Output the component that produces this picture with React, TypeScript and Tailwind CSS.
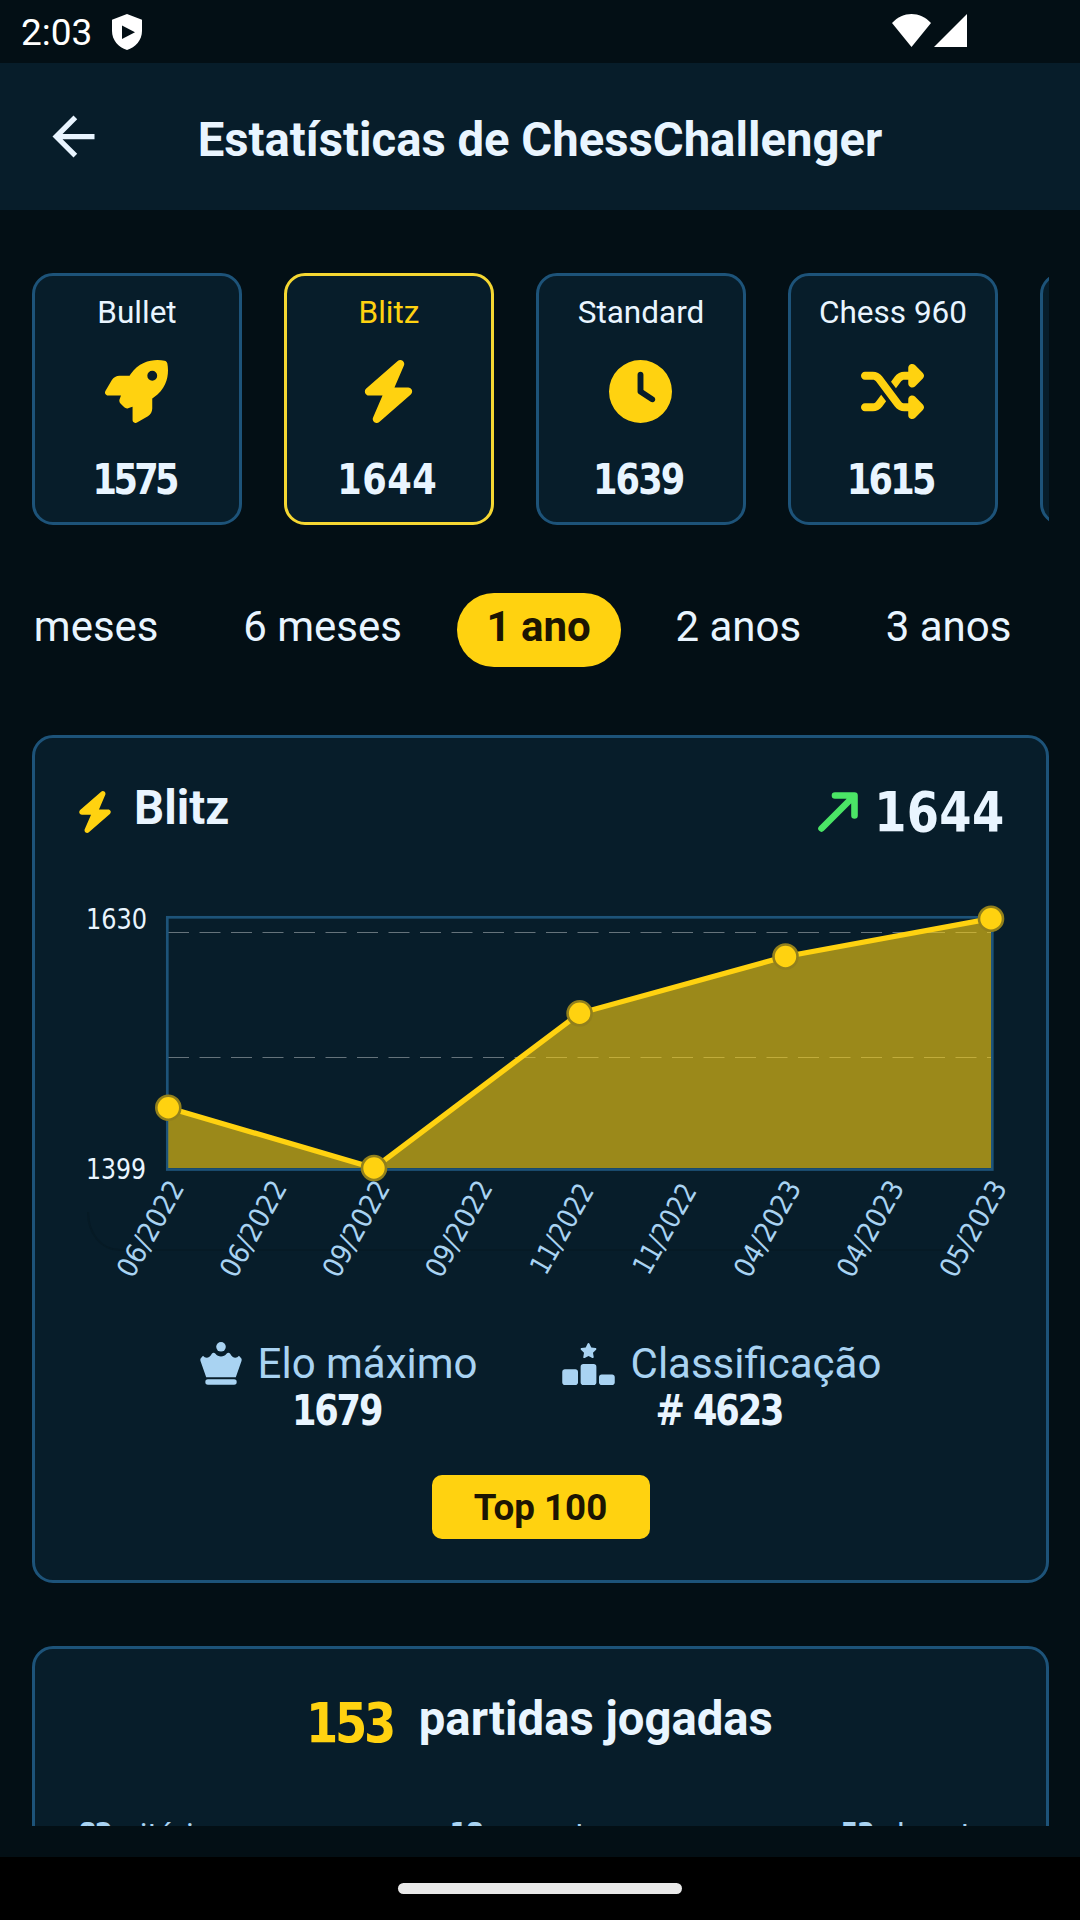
import type { ReactNode } from 'react';
import { MdArrowBack } from 'react-icons/md';
import { FaBolt, FaClock, FaRankingStar, FaRocket, FaShuffle } from 'react-icons/fa6';

interface Rating {
  label: string;
  value: string;
  icon: ReactNode;
  tracking: string;
}

const RATINGS: Rating[] = [
  { label: 'Bullet', value: '1575', icon: <FaRocket />, tracking: 'tracking-[-4px] mr-[5px]' },
  { label: 'Blitz', value: '1644', icon: <FaBolt />, tracking: 'tracking-[0.5px] mr-[3px]' },
  { label: 'Standard', value: '1639', icon: <FaClock />, tracking: 'tracking-[-2px] mr-[6px]' },
  { label: 'Chess 960', value: '1615', icon: <FaShuffle />, tracking: 'tracking-[-3px] mr-[6px]' },
];

const PERIODS = ['3 meses', '6 meses', '1 ano', '2 anos', '3 anos'];

const LABELS = [
  '06/2022',
  '06/2022',
  '09/2022',
  '09/2022',
  '11/2022',
  '11/2022',
  '04/2023',
  '04/2023',
  '05/2023',
];

// chart coordinates, relative to the left and top of the chart svg
const POINTS = [
  [134.3, 207.7],
  [340, 268],
  [545.6, 113.3],
  [751.5, 56.5],
  [957, 18.7],
];

function Digits({ className, children }: { className: string; children: ReactNode }) {
  return (
    <span
      className={`inline-block scale-x-[0.92] font-['DejaVu_Sans_Condensed','DejaVu_Sans',sans-serif] font-bold ${className}`}
    >
      {children}
    </span>
  );
}

function QueenIcon() {
  return (
    <svg className="h-[43px] w-[42px]" viewBox="0 0 42 43" fill="currentColor">
      <circle cx="21" cy="4.8" r="4.8" />
      <path d="M0.6 16.5L3 13.8C5.5 16.8 9.5 16.3 11.8 11.8Q13.5 9.8 15.5 11.8C18 15.3 24 15.3 26.5 11.8Q28.5 9.8 30.2 11.8C32.5 16.3 36.5 16.8 39 13.8L41.4 16.5Q42 17.5 41.5 19L35.8 35.3H6.2L0.5 19Q0 17.5 0.6 16.5Z" />
      <rect x="5.3" y="37.3" width="31.4" height="5.4" rx="2.6" />
    </svg>
  );
}

function StatusBar() {
  return (
    <div className="flex h-[63px] items-start justify-between bg-[#030f15] pl-[21px] pr-[113px] pt-[14px]">
      <div className="flex">
        <span className="mt-[-2px] text-[37px] leading-[42px] text-white">2:03</span>
        <svg className="ml-5 h-9 w-[30px]" viewBox="0 0 30 36">
          <path
            d="M15 0L30 5.8V17C30 26 23.5 33.5 15 36C6.5 33.5 0 26 0 17V5.8Z M10 11.5V25L23 18.2Z"
            fill="#fff"
            fillRule="evenodd"
          />
        </svg>
      </div>
      <div className="flex gap-[3px]">
        <svg className="h-[33px] w-[39px]" viewBox="0 0 39 33">
          <path d="M0 9C11 -3 28 -3 39 9L19.5 33Z" fill="#fff" />
        </svg>
        <svg className="h-[33px] w-[33px]" viewBox="0 0 33 33">
          <path d="M33 0V33H0Z" fill="#fff" />
        </svg>
      </div>
    </div>
  );
}

function Header() {
  return (
    <header className="grid h-[147px] grid-cols-[126px_1fr_126px] items-center bg-[#071d2a]">
      <MdArrowBack className="ml-[42px] h-[63px] w-[63px] text-[#e9f5ff]" />
      <h1 className="pt-[9px] text-center text-[47.25px] font-bold leading-none">
        Estatísticas de ChessChallenger
      </h1>
    </header>
  );
}

function RatingCard({ rating, active }: { rating: Rating; active: boolean }) {
  return (
    <div
      className={`flex h-[252px] w-[210px] shrink-0 flex-col items-center rounded-[21px] border-[3px] bg-[#071d2a] ${
        active ? 'border-[#f5d732]' : 'border-[#1d5379]'
      }`}
    >
      <span className={`mt-[18px] text-[31.5px] leading-[37px] ${active ? 'text-[#ffd210]' : ''}`}>
        {rating.label}
      </span>
      <span className="mr-px mt-[29px] text-[63px] text-[#ffd210]">{rating.icon}</span>
      <Digits className={`mt-8 text-[42.5px] leading-[50px] ${rating.tracking}`}>
        {rating.value}
      </Digits>
    </div>
  );
}

function Chart() {
  const line = POINTS.map((p) => p.join(',')).join(' ');

  return (
    <svg className="-ml-px mt-[58px] block h-[400px] w-[1010px]" viewBox="0 0 1010 400">
      <path
        d="M54 312C54 332 66 350 86 350H910C930 350 942 332 942 312"
        fill="none"
        stroke="#061a25"
        strokeWidth="2"
      />
      <g stroke="#fff" strokeOpacity="0.38" strokeDasharray="21 10.5">
        <line x1="134" x2="957" y1="32.5" y2="32.5" />
        <line x1="134" x2="957" y1="157.5" y2="157.5" />
      </g>
      <rect
        x="133.3"
        y="17.3"
        width="825"
        height="252.2"
        fill="none"
        stroke="#1d5379"
        strokeWidth="2.7"
      />
      <polygon points={`134.3,268 ${line} 957,268`} fill="#ffd210" fillOpacity="0.6" />
      <polyline points={line} fill="none" stroke="#ffd210" strokeWidth="5.3" />
      {POINTS.map(([x, y]) => (
        <circle key={x} cx={x} cy={y} r="12" fill="#ffd210" stroke="#92801c" strokeWidth="2.6" />
      ))}
      <g
        className="font-['DejaVu_Sans_Condensed','DejaVu_Sans',sans-serif]"
        fontSize="28"
        fill="#e9f5ff"
      >
        <text x="52" y="29" textLength="61" lengthAdjust="spacingAndGlyphs">
          1630
        </text>
        <text x="52" y="279" textLength="60" lengthAdjust="spacingAndGlyphs">
          1399
        </text>
        {LABELS.map((label, i) => (
          <text
            key={i}
            transform={`translate(${124.8 + i * 102.84} 333.5) rotate(-60.3)`}
            textAnchor="middle"
            textLength={label.startsWith('11') ? 99 : 106}
            lengthAdjust="spacingAndGlyphs"
            fill="#a9d3f2"
          >
            {label}
          </text>
        ))}
      </g>
    </svg>
  );
}

function Stat({ icon, label, value }: { icon: ReactNode; label: string; value: string }) {
  return (
    <div className="flex flex-col items-center">
      <div className="flex items-center text-[42px] leading-[49px] text-[#a9d3f2]">
        {icon}
        <span className="ml-4">{label}</span>
      </div>
      <Digits className="mr-[4px] mt-[-2px] text-[42.5px] leading-[50px] tracking-[-2.3px]">
        {value}
      </Digits>
    </div>
  );
}

function ChartCard() {
  return (
    <section className="mt-[68px] h-[848px] rounded-[21px] border-[3px] border-[#1d5379] bg-[#071d2a]">
      <div className="flex h-[104px] items-end justify-between pl-[39px] pr-[42px]">
        <div className="flex items-center">
          <FaBolt className="text-[42px] text-[#ffd210]" />
          <h2 className="mb-[6px] ml-[18px] text-[47.25px] font-bold leading-[55px]">Blitz</h2>
        </div>
        <div className="flex items-center">
          <svg className="h-10 w-10" viewBox="0 0 40 40" fill="none" stroke="#4be566">
            <path
              d="M3.5 36.5L34 6M17 3.5H36.5V23.5"
              strokeWidth="6.6"
              strokeLinecap="round"
              strokeLinejoin="round"
            />
          </svg>
          <Digits className="ml-[5px] origin-right text-[56px] leading-[60px] tracking-[0.3px]">
            1644
          </Digits>
        </div>
      </div>
      <Chart />
      <div className="mt-[39px] flex justify-center gap-[84px]">
        <Stat icon={<QueenIcon />} label="Elo máximo" value="1679" />
        <Stat
          icon={<FaRankingStar className="h-[42px] w-[53px]" />}
          label="Classificação"
          value="# 4623"
        />
      </div>
      <button className="mx-auto mt-[39px] block h-16 w-[218px] rounded-[10px] bg-[#ffd210] text-[36.75px] font-bold leading-[65px] text-[#1c1502]">
        Top 100
      </button>
    </section>
  );
}

function Result({ count, label }: { count: string; label: string }) {
  return (
    <div className="flex items-baseline gap-3 text-[31.5px] leading-[37px] text-[#a9d3f2]">
      <Digits className="tracking-[-2px]">{count}</Digits>
      <span>{label}</span>
    </div>
  );
}

function GamesCard() {
  return (
    <section className="mt-[63px] h-[400px] rounded-[21px] border-[3px] border-[#1d5379] bg-[#071d2a] px-[42px]">
      <div className="mt-[41px] flex items-center justify-center">
        <Digits className="-ml-[2px] mr-[2px] origin-left text-[56px] leading-[66px] tracking-[-3.5px] text-[#ffd210]">
          153
        </Digits>
        <h2 className="ml-4 mb-2 text-[47.25px] font-bold leading-[55px]">partidas jogadas</h2>
      </div>
      <div className="mt-[60px] flex justify-between">
        <Result count="82" label="vitórias" />
        <Result count="18" label="empates" />
        <Result count="53" label="derrotas" />
      </div>
    </section>
  );
}

export default function App() {
  return (
    <div className="flex h-[1920px] w-[1080px] flex-col overflow-hidden bg-[#030f15] font-[Roboto,sans-serif] text-[#e9f5ff]">
      <StatusBar />
      <Header />
      <main className="ml-8 mr-[31px] mt-[63px] h-[1553px] shrink-0 overflow-hidden">
        <div className="flex gap-[42px] overflow-hidden">
          {RATINGS.map((rating) => (
            <RatingCard key={rating.label} rating={rating} active={rating.label === 'Blitz'} />
          ))}
          <div className="h-[252px] w-[210px] shrink-0 rounded-[21px] border-[3px] border-[#1d5379] bg-[#071d2a]" />
        </div>
        <div className="mt-[68px] flex gap-[25px] overflow-hidden whitespace-nowrap text-[42px] leading-[67px]">
          {PERIODS.map((period) => (
            <span
              key={period}
              className={`h-[74px] shrink-0 rounded-full px-[29.8px] first:ml-[-62px] ${
                period === '1 ano' ? 'bg-[#ffd210] font-bold text-[#1c1502]' : ''
              }`}
            >
              {period}
            </span>
          ))}
        </div>
        <ChartCard />
        <GamesCard />
      </main>
      <div className="mt-auto flex h-[63px] shrink-0 justify-center bg-black pt-[26px]">
        <div className="h-[11px] w-[284px] rounded-full bg-[#e9e9e9]" />
      </div>
    </div>
  );
}
